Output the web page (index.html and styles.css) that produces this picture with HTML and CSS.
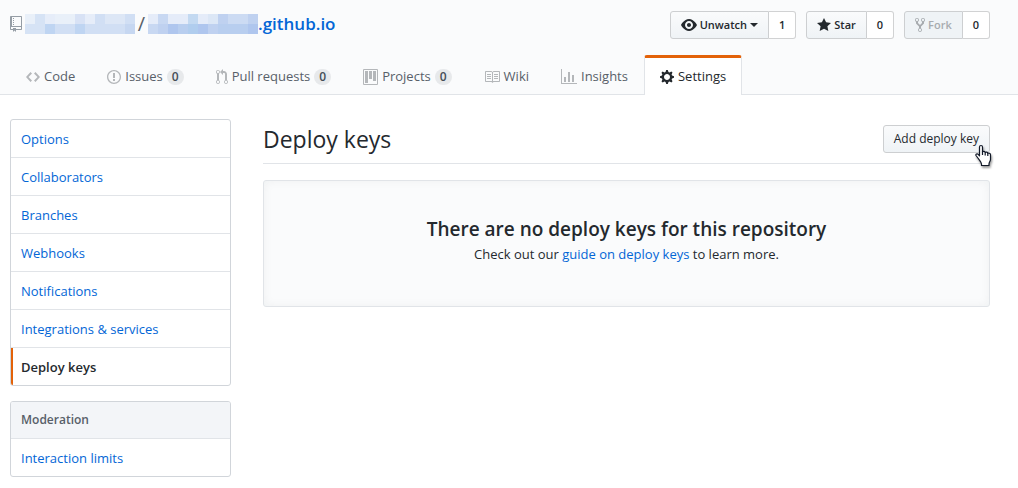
FILE: index.html
```html
<!DOCTYPE html>
<html lang="en">
<head>
<meta charset="utf-8">
<title>Deploy keys</title>
<link rel="stylesheet" href="styles.css">
</head>
<body>
<header class="repohead">
  <div class="repohead-top">
    <h1 class="repo-title">
      <svg class="icon repo-icon" width="12" height="16" viewBox="0 0 12 16" aria-hidden="true"><path d="M4 9H3V8h1v1zm0-3H3v1h1V6zm0-2H3v1h1V4zm0-2H3v1h1V2zm8-1v12c0 .55-.45 1-1 1H6v2l-1.5-1.5L3 16v-2H1c-.55 0-1-.45-1-1V1c0-.55.45-1 1-1h10c.55 0 1 .45 1 1zm-1 10H1v2h2v-1h3v1h5v-2zm0-10H2v9h9V1z"/></svg>
      <a href="#" class="masked" aria-label="Owner"><svg width="110" height="20" viewBox="0 0 11 2" preserveAspectRatio="none" shape-rendering="crispEdges">
        <path fill="#e9f0f9" d="M0 0h1v1H0zM3 0h2v1H3z"/><path fill="#d6e3f5" d="M1 0h1v1H1zM0 1h2v1H0z"/><path fill="#e6edf9" d="M2 0h1v1H2zM6 0h1v1H6z"/><path fill="#d8e2f5" d="M5 0h1v1H5z"/><path fill="#dde7f6" d="M8 0h2v1H8z"/><path fill="#d1dff4" d="M7 0h1v1H7zM10 0h1v1h-1zM3 1h2v1H3zM6 1h4v1H6z"/><path fill="#bfd5f2" d="M2 1h1v1H2zM5 1h1v1H5z"/><path fill="#c6d7f1" d="M10 1h1v1h-1z"/></svg></a>
      <span class="slash">/</span>
      <a href="#" class="repo-name"><svg width="110" height="20" viewBox="0 0 11 2" preserveAspectRatio="none" shape-rendering="crispEdges" aria-hidden="true">
        <path fill="#e5ecf9" d="M0 0h1v1H0zM2 0h2v1H2zM5 0h1v1H5z"/><path fill="#c8d8f2" d="M1 0h1v1H1zM0 1h1v1H0z"/><path fill="#c3d9f1" d="M4 0h1v1H4z"/><path fill="#dce7f6" d="M6 0h1v1H6z"/><path fill="#bfd1f0" d="M7 0h1v1H7zM10 0h1v1h-1zM1 1h1v1H1zM6 1h1v1H6z"/><path fill="#ccdbf3" d="M8 0h2v1H8z"/><path fill="#afc6ee" d="M2 1h1v1H2zM5 1h1v1H5zM10 1h1v1h-1z"/><path fill="#b0cdee" d="M4 1h1v1H4z"/><path fill="#b8ceef" d="M3 1h1v1H3zM7 1h3v1H7z"/></svg>.github.io</a>
    </h1>
    <div class="actions">
      <div class="action">
        <button type="button" class="btn"><svg class="icon" width="16" height="16" viewBox="0 0 16 16" aria-hidden="true"><path d="M8.06 2C3 2 0 8 0 8s3 6 8.06 6C13 14 16 8 16 8s-3-6-7.94-6zM8 12c-2.2 0-4-1.78-4-4 0-2.2 1.8-4 4-4 2.22 0 4 1.8 4 4 0 2.22-1.78 4-4 4zm2-4c0 1.11-.89 2-2 2-1.11 0-2-.89-2-2 0-1.11.89-2 2-2 1.11 0 2 .89 2 2z"/></svg>Unwatch<span class="caret"></span></button>
        <a href="#" class="count">1</a>
      </div>
      <div class="action">
        <button type="button" class="btn"><svg class="icon" width="14" height="16" viewBox="0 0 14 16" aria-hidden="true"><path d="M14 6l-4.9-.64L7 1 4.9 5.36 0 6l3.6 3.26L2.67 14 7 11.67 11.33 14l-.93-4.74z"/></svg>Star</button>
        <a href="#" class="count">0</a>
      </div>
      <div class="action">
        <button type="button" class="btn" disabled><svg class="icon" width="10" height="16" viewBox="0 0 10 16" aria-hidden="true"><path d="M8 1a1.993 1.993 0 0 0-1 3.72V6L5 8 3 6V4.72A1.993 1.993 0 0 0 2 1a1.993 1.993 0 0 0-1 3.72V6.5l3 3v1.78A1.993 1.993 0 0 0 5 15a1.993 1.993 0 0 0 1-3.72V9.5l3-3V4.72A1.993 1.993 0 0 0 8 1zM2 4.2C1.34 4.2.8 3.65.8 3c0-.65.55-1.2 1.2-1.2.65 0 1.2.55 1.2 1.2 0 .65-.55 1.2-1.2 1.2zm3 10c-.66 0-1.2-.55-1.2-1.2 0-.65.55-1.2 1.2-1.2.65 0 1.2.55 1.2 1.2 0 .65-.55 1.2-1.2 1.2zm3-10c-.66 0-1.2-.55-1.2-1.2 0-.65.55-1.2 1.2-1.2.65 0 1.2.55 1.2 1.2 0 .65-.55 1.2-1.2 1.2z"/></svg>Fork</button>
        <a href="#" class="count">0</a>
      </div>
    </div>
  </div>
  <nav class="tabs" aria-label="Repository">
    <a href="#" class="tab"><svg class="icon" width="14" height="16" viewBox="0 0 14 16" aria-hidden="true"><path d="M9.5 3L8 4.5 11.5 8 8 11.5 9.5 13 14 8 9.5 3zm-5 0L0 8l4.5 5L6 11.5 2.5 8 6 4.5 4.5 3z"/></svg>Code</a>
    <a href="#" class="tab"><svg class="icon" width="14" height="16" viewBox="0 0 14 16" aria-hidden="true"><path d="M7 2.3c3.14 0 5.7 2.56 5.7 5.7s-2.56 5.7-5.7 5.7A5.71 5.71 0 0 1 1.3 8c0-3.14 2.56-5.7 5.7-5.7zM7 1C3.14 1 0 4.14 0 8s3.14 7 7 7 7-3.14 7-7-3.14-7-7-7zm1 3H6v5h2V4zm0 6H6v2h2v-2z"/></svg>Issues<span class="counter">0</span></a>
    <a href="#" class="tab"><svg class="icon" width="12" height="16" viewBox="0 0 12 16" aria-hidden="true"><path d="M11 11.28V5c-.03-.78-.34-1.47-.94-2.06C9.46 2.35 8.78 2.03 8 2H7V0L4 3l3 3V4h1c.27.02.48.11.69.31.21.2.3.42.31.69v6.28A1.993 1.993 0 0 0 10 15a1.993 1.993 0 0 0 1-3.72zm-1 2.92c-.66 0-1.2-.55-1.2-1.2 0-.65.55-1.2 1.2-1.2.65 0 1.2.55 1.2 1.2 0 .65-.55 1.2-1.2 1.2zM4 3c0-1.11-.89-2-2-2a1.993 1.993 0 0 0-1 3.72v6.56A1.993 1.993 0 0 0 2 15a1.993 1.993 0 0 0 1-3.72V4.72c.59-.34 1-.98 1-1.72zm-.8 10c0 .66-.55 1.2-1.2 1.2-.65 0-1.2-.55-1.2-1.2 0-.65.55-1.2 1.2-1.2.65 0 1.2.55 1.2 1.2zM2 4.2C1.34 4.2.8 3.65.8 3c0-.65.55-1.2 1.2-1.2.65 0 1.2.55 1.2 1.2 0 .65-.55 1.2-1.2 1.2z"/></svg>Pull requests<span class="counter">0</span></a>
    <a href="#" class="tab"><svg class="icon" width="15" height="16" viewBox="0 0 15 16" aria-hidden="true"><path fill-rule="evenodd" d="M10 12h3V2h-3v10zm-4-2h3V2H6v8zm-4 4h3V2H2v12zm-1 1h13V1H1v14zM14 0H1a1 1 0 0 0-1 1v14a1 1 0 0 0 1 1h13a1 1 0 0 0 1-1V1a1 1 0 0 0-1-1z"/></svg>Projects<span class="counter">0</span></a>
    <a href="#" class="tab"><svg class="icon" width="16" height="16" viewBox="0 0 16 16" aria-hidden="true"><path d="M3 5h4v1H3V5zm0 3h4V7H3v1zm0 2h4V9H3v1zm11-5h-4v1h4V5zm0 2h-4v1h4V7zm0 2h-4v1h4V9zm2-6v9c0 .55-.45 1-1 1H9.5l-1 1-1-1H2c-.55 0-1-.45-1-1V3c0-.55.45-1 1-1h5.5l1 1 1-1H15c.55 0 1 .45 1 1zm-8 .5L7.5 3H2v9h6V3.5zm7-.5H9.5l-.5.5V12h6V3z"/></svg>Wiki</a>
    <a href="#" class="tab"><svg class="icon" width="16" height="16" viewBox="0 0 16 16" aria-hidden="true"><path d="M16 14v1H0V0h1v14h15zM5 13H3V8h2v5zm4 0H7V3h2v10zm4 0h-2V6h2v7z"/></svg>Insights</a>
    <a href="#" class="tab selected" aria-current="page"><svg class="icon" width="14" height="16" viewBox="0 0 14 16" aria-hidden="true"><path d="M14 8.77v-1.6l-1.94-.64-.45-1.09.88-1.84-1.13-1.13-1.81.91-1.09-.45-.69-1.92h-1.6l-.63 1.94-1.11.45-1.84-.88-1.13 1.13.91 1.81-.45 1.09L0 7.23v1.59l1.94.64.45 1.09-.88 1.84 1.13 1.13 1.81-.91 1.09.45.69 1.92h1.59l.63-1.94 1.11-.45 1.84.88 1.13-1.13-.92-1.81.47-1.09L14 8.75v.02zM7 11c-1.66 0-3-1.34-3-3s1.34-3 3-3 3 1.34 3 3-1.34 3-3 3z"/></svg>Settings</a>
  </nav>
</header>
<div class="layout">
  <aside class="sidebar">
    <nav class="menu" aria-label="Settings">
      <a href="#" class="menu-item">Options</a>
      <a href="#" class="menu-item">Collaborators</a>
      <a href="#" class="menu-item">Branches</a>
      <a href="#" class="menu-item">Webhooks</a>
      <a href="#" class="menu-item">Notifications</a>
      <a href="#" class="menu-item">Integrations &amp; services</a>
      <a href="#" class="menu-item current" aria-current="page">Deploy keys</a>
    </nav>
    <nav class="menu" aria-labelledby="moderation">
      <h3 class="menu-heading" id="moderation">Moderation</h3>
      <a href="#" class="menu-item">Interaction limits</a>
    </nav>
  </aside>
  <main class="content">
    <div class="subhead">
      <h2 class="subhead-title">Deploy keys</h2>
      <div class="subhead-action">
        <button type="button" class="btn add">Add deploy key</button>
        <svg class="pointer" width="19" height="24" viewBox="0 0 19 24" aria-hidden="true"><path d="M6 1.5c1 0 1.500.6 1.500 1.500v5c.6-1 2.500-.8 2.700.5.800-.8 2.400-.4 2.600.8.900-.6 2.700-.1 2.700 1.500v4.700c0 1.500-1.500 2.500-1.500 4.500v1.500H6.500V20c0-1.500-2-3.500-3.200-5.500L1 11.500c-.5-1.200 1-2.300 2.200-1.200l1.300 1.500V3c0-.9.5-1.500 1.500-1.500z" fill="#fff" stroke="#111827" stroke-width="1.200" stroke-linejoin="round"/><path d="M7.500 7.500V11M10.200 8.500v3M12.800 9.300V12" fill="none" stroke="#111827" stroke-width="1.200"/></svg>
      </div>
    </div>
    <section class="blankslate">
      <h3 class="blankslate-title">There are no deploy keys for this repository</h3>
      <p class="blankslate-text">Check out our <a href="#">guide on deploy keys</a> to learn more.</p>
    </section>
  </main>
</div>
</body>
</html>
```
FILE: styles.css
```css
* { box-sizing: border-box; }
body {
  margin: 0;
  font-family: "Open Sans", "Noto Sans", sans-serif;
  font-size: 13px;
  line-height: 21px;
  color: #24292e;
  background: #fff;
}
a { color: #0366d6; text-decoration: none; }
h1, h2, h3, p { margin: 0; }
.icon { flex: none; fill: currentColor; }

.repohead {
  display: flex;
  flex-direction: column;
  gap: 16px;
  padding: 10px 28px 0 10px;
  background: #fafbfc;
  border-bottom: 1px solid #e1e4e8;
}
.repohead-top {
  display: flex;
  justify-content: space-between;
  align-items: flex-start;
}
.repo-title {
  display: flex;
  align-items: center;
  font-size: 17px;
  line-height: 28px;
  font-weight: 400;
}
.repo-title svg { display: block; flex: none; }
.repo-icon { margin-right: 3px; color: #959da5; }
.slash { width: 13px; font-size: 20px; text-align: center; color: #586069; }
.repo-name { display: flex; align-items: center; font-weight: 600; }

.actions { display: flex; gap: 10px; padding-top: 1px; }
.action { display: flex; }
.btn {
  display: flex;
  align-items: center;
  gap: 3px;
  height: 28px;
  padding: 0 10px;
  font: 600 11px/20px "Open Sans", "Noto Sans", sans-serif;
  color: #24292e;
  white-space: nowrap;
  background: linear-gradient(#fafbfc, #eff3f6);
  border: 1px solid #cdcfd1;
  border-radius: 3px;
}
.action .btn { border-radius: 3px 0 0 3px; }
.btn.add { font-size: 12px; font-weight: 500; }
.btn:disabled { color: #a7abaf; background: #eff3f6; }
.count {
  padding: 3px 10px;
  font-size: 11px;
  line-height: 20px;
  font-weight: 600;
  color: #24292e;
  background: #fff;
  border: 1px solid #d1d2d3;
  border-left: 0;
  border-radius: 0 3px 3px 0;
}
.caret {
  border: 4px solid transparent;
  border-top-color: currentColor;
  border-bottom: 0;
}

.tabs { display: flex; margin-bottom: -1px; }
.tab {
  display: flex;
  align-items: center;
  gap: 4px;
  height: 40px;
  padding: 0 15px;
  color: #586069;
  white-space: nowrap;
  border: 1px solid transparent;
  border-top-width: 3px;
  border-bottom: 0;
  border-radius: 3px 3px 0 0;
}
.tab .icon { color: #b4b7ba; }
.tab.selected {
  color: #24292e;
  background: #fff;
  border-color: #e36209 #e1e4e8 transparent;
}
.tab.selected .icon { color: #24292e; }
.counter {
  padding: 0 5px;
  font-size: 12px;
  line-height: 16px;
  font-weight: 600;
  color: #444d56;
  background: #e7e9eb;
  border-radius: 20px;
}

.layout {
  display: flex;
  gap: 32px;
  padding: 24px 28px 11px 10px;
}
.sidebar {
  display: flex;
  flex: 0 0 221px;
  flex-direction: column;
  gap: 15px;
}
.menu {
  overflow: hidden;
  border: 1px solid #d1d5da;
  border-radius: 3px;
}
.menu-item { display: block; padding: 9px 10px 7px; }
.menu > * + * { border-top: 1px solid #e1e4e8; }
.menu-heading {
  padding: 8px 10px;
  font-size: 12px;
  line-height: 20px;
  font-weight: 600;
  color: #586069;
  background: #f3f5f8;
}
.menu-item.current {
  font-weight: 600;
  color: #24292e;
  box-shadow: inset 2px 0 #e36209;
}

.content { flex: 1; min-width: 0; }
.subhead {
  display: flex;
  justify-content: space-between;
  align-items: center;
  padding: 4px 0 8px;
  margin-bottom: 16px;
  border-bottom: 1px solid #e1e4e8;
}
.subhead-title { font-size: 23px; line-height: 32px; font-weight: 400; }
.subhead-action { position: relative; }
.pointer {
  position: absolute;
  top: 19px;
  right: -4px;
  filter: drop-shadow(1px 2px 1px rgba(0, 0, 0, .4));
}
.blankslate {
  padding: 33px 32px 31px;
  text-align: center;
  background: #fafbfc;
  border: 1px solid #e1e4e8;
  border-radius: 3px;
  box-shadow: inset 0 0 10px rgba(27, 31, 35, .05);
}
.blankslate-title { font-size: 19px; line-height: 30px; font-weight: 600; }
.blankslate-text { padding-bottom: 10px; }
```
